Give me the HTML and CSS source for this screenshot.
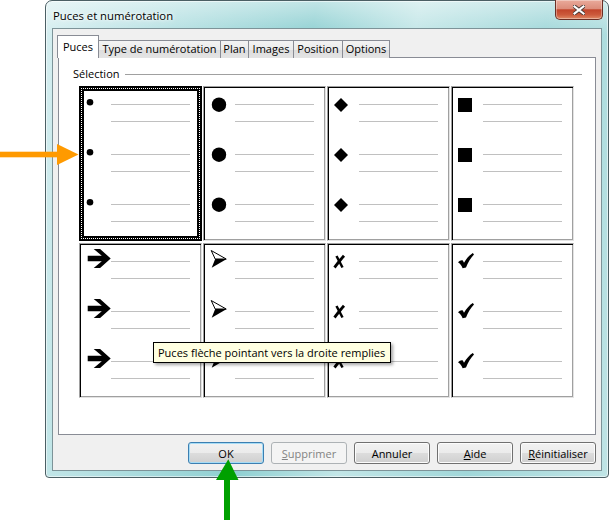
FILE: index.html
```html
<!DOCTYPE html>
<html lang="fr">
<head>
  <meta charset="UTF-8" />
  <title>Puces et numérotation</title>
  <link rel="stylesheet" href="styles.css">
</head>
<body>

  <!-- bullet shapes, reused in every cell -->
  <svg class="defs" width="0" height="0">
    <symbol id="b-dot" viewBox="0 0 31 32"><circle cx="10" cy="14.3" r="3.3"/></symbol>
    <symbol id="b-circle" viewBox="0 0 31 32"><circle cx="15" cy="16.7" r="7.2"/></symbol>
    <symbol id="b-diamond" viewBox="0 0 31 32"><polygon points="13,10 20,17 13,24 6,17"/></symbol>
    <symbol id="b-square" viewBox="0 0 31 32"><rect x="6" y="10" width="14" height="14"/></symbol>
    <symbol id="b-arrow" viewBox="0 0 31 32">
      <path transform="translate(7.7 4)" d="M0 6.8H14.1L6 0H12.4L23 9.5L12.4 19H6L14.1 12.2H0Z"/>
    </symbol>
    <symbol id="b-head" viewBox="0 0 31 32">
      <g transform="translate(6.7 5)">
        <path d="M0.5 0.5L15.5 9H4.5Z" fill="#fff" stroke="#000" stroke-width="1"/>
        <path d="M4.5 9H16L1 17.7Z"/>
      </g>
    </symbol>
    <symbol id="b-cross" viewBox="0 0 31 32">
      <g transform="translate(5 10)" stroke="#000" fill="none">
        <path d="M3.5 1L9.5 12.5" stroke-width="2.5"/>
        <path d="M11 0.8C8 4 5 8 1.5 12.5" stroke-width="2.9"/>
      </g>
    </symbol>
    <symbol id="b-check" viewBox="0 0 31 32">
      <path transform="translate(6 8)" d="M0 9.2C1.6 7.6 3.4 6.8 4.8 7.4L6 9.8C8.4 5.6 11.4 2.2 14.8 0L16 1.4C12.8 4.6 10 9.2 8 14.6L4.6 15.2C3.8 12.8 2.4 10.8 0 9.2Z"/>
    </symbol>
  </svg>

  <div class="stage">

    <div class="window">
      <div class="titlebar">
        <span class="title">Puces et numérotation</span>
        <div class="close">
          <svg width="12" height="10" viewBox="0 0 12 10">
            <path d="M1.5 1.5L10.5 8.5M10.5 1.5L1.5 8.5" stroke="#4a3a36" stroke-width="4" stroke-linecap="square"/>
            <path d="M1.5 1.5L10.5 8.5M10.5 1.5L1.5 8.5" stroke="#fff" stroke-width="2.2" stroke-linecap="square"/>
          </svg>
        </div>
      </div>

      <div class="client">
        <div class="tabs">
          <div class="tab active t-puces">Puces</div>
          <div class="tab t-type">Type de numérotation</div>
          <div class="tab t-plan">Plan</div>
          <div class="tab t-images">Images</div>
          <div class="tab t-position">Position</div>
          <div class="tab t-options">Options</div>
        </div>

        <div class="panel">
          <div class="group-title">
            <span>Sélection</span>
            <i class="rule"></i>
          </div>

          <div class="bullet-grid">
            <div class="cell selected">
              <div class="item"><svg class="mark"><use href="#b-dot"/></svg><div class="lines"><i></i><i></i></div></div>
              <div class="item"><svg class="mark"><use href="#b-dot"/></svg><div class="lines"><i></i><i></i></div></div>
              <div class="item"><svg class="mark"><use href="#b-dot"/></svg><div class="lines"><i></i><i></i></div></div>
            </div>
            <div class="cell">
              <div class="item"><svg class="mark"><use href="#b-circle"/></svg><div class="lines"><i></i><i></i></div></div>
              <div class="item"><svg class="mark"><use href="#b-circle"/></svg><div class="lines"><i></i><i></i></div></div>
              <div class="item"><svg class="mark"><use href="#b-circle"/></svg><div class="lines"><i></i><i></i></div></div>
            </div>
            <div class="cell">
              <div class="item"><svg class="mark"><use href="#b-diamond"/></svg><div class="lines"><i></i><i></i></div></div>
              <div class="item"><svg class="mark"><use href="#b-diamond"/></svg><div class="lines"><i></i><i></i></div></div>
              <div class="item"><svg class="mark"><use href="#b-diamond"/></svg><div class="lines"><i></i><i></i></div></div>
            </div>
            <div class="cell">
              <div class="item"><svg class="mark"><use href="#b-square"/></svg><div class="lines"><i></i><i></i></div></div>
              <div class="item"><svg class="mark"><use href="#b-square"/></svg><div class="lines"><i></i><i></i></div></div>
              <div class="item"><svg class="mark"><use href="#b-square"/></svg><div class="lines"><i></i><i></i></div></div>
            </div>

            <div class="cell">
              <div class="item"><svg class="mark"><use href="#b-arrow"/></svg><div class="lines"><i></i><i></i></div></div>
              <div class="item"><svg class="mark"><use href="#b-arrow"/></svg><div class="lines"><i></i><i></i></div></div>
              <div class="item"><svg class="mark"><use href="#b-arrow"/></svg><div class="lines"><i></i><i></i></div></div>
            </div>
            <div class="cell">
              <div class="item"><svg class="mark"><use href="#b-head"/></svg><div class="lines"><i></i><i></i></div></div>
              <div class="item"><svg class="mark"><use href="#b-head"/></svg><div class="lines"><i></i><i></i></div></div>
              <div class="item"><svg class="mark"><use href="#b-head"/></svg><div class="lines"><i></i><i></i></div></div>
            </div>
            <div class="cell">
              <div class="item"><svg class="mark"><use href="#b-cross"/></svg><div class="lines"><i></i><i></i></div></div>
              <div class="item"><svg class="mark"><use href="#b-cross"/></svg><div class="lines"><i></i><i></i></div></div>
              <div class="item"><svg class="mark"><use href="#b-cross"/></svg><div class="lines"><i></i><i></i></div></div>
            </div>
            <div class="cell">
              <div class="item"><svg class="mark"><use href="#b-check"/></svg><div class="lines"><i></i><i></i></div></div>
              <div class="item"><svg class="mark"><use href="#b-check"/></svg><div class="lines"><i></i><i></i></div></div>
              <div class="item"><svg class="mark"><use href="#b-check"/></svg><div class="lines"><i></i><i></i></div></div>
            </div>
          </div>
        </div>

        <div class="buttons">
          <button class="btn default">OK</button>
          <button class="btn" disabled><u>S</u>upprimer</button>
          <button class="btn">Annuler</button>
          <button class="btn"><u>A</u>ide</button>
          <button class="btn"><u>R</u>éinitialiser</button>
        </div>
      </div>
    </div>

    <!-- Tooltip -->
    <div class="tooltip">Puces flèche pointant vers la droite remplies</div>

    <!-- Callout arrows -->
    <svg class="arrow-orange" width="80" height="23" viewBox="0 0 80 23">
      <rect x="0" y="8.7" width="58" height="5.6"/>
      <polygon points="57,1 78.5,11.5 57,22"/>
    </svg>
    <svg class="arrow-green" width="26" height="62" viewBox="0 0 26 62">
      <polygon points="2,22 14.3,1.3 24.5,22"/>
      <rect x="10" y="21" width="6" height="41"/>
    </svg>
  </div>

</body>
</html>
```

FILE: styles.css
```css
* { margin: 0; padding: 0; box-sizing: border-box; }

body {
  background: #fff;
  font-family: "Open Sans", "Noto Sans", sans-serif;
  font-size: 11px;
  color: #000;
}

.defs {
  position: absolute;
  width: 0;
  height: 0;
}

.stage {
  position: relative;
  width: 610px;
  height: 520px;
  overflow: hidden;
  background: #fff;
}

/* --- WINDOW FRAME --- */
.window {
  margin-left: 45px;
  width: 564px;
  height: 478px;
  border: 1px solid #4b5f64;
  border-radius: 7px 7px 4px 4px;
  padding: 0 6px 6px;
  background:
    linear-gradient(to bottom, rgba(255,255,255,0.45), rgba(255,255,255,0) 34px),
    linear-gradient(100deg, #d6eef0 0%, #b2dfe1 22%, #8fd0d2 42%, #c2e6e7 58%, #a0d7d9 78%, #bfe4e5 100%);
  box-shadow: inset 0 0 0 1px rgba(255,255,255,0.55);
}

.titlebar {
  height: 27px;
  display: flex;
  align-items: flex-start;
}

.title {
  padding: 7px 0 0 1px;
  font-size: 11.3px;
  line-height: 16px;
  text-shadow: 0 0 6px #fff, 0 0 3px #fff;
}

.close {
  margin: -1px -1px 0 auto;
  width: 48px;
  height: 20px;
  border: 1px solid #6b2f25;
  border-top: none;
  border-radius: 0 0 5px 5px;
  background: linear-gradient(#e9aa9b 0%, #dc8d7b 45%, #c2452b 52%, #cc5a3c 78%, #e08a66 100%);
  box-shadow: inset 0 0 0 1px rgba(255,255,255,0.35);
  display: flex;
  align-items: center;
  justify-content: center;
}

.client {
  height: 443px;
  border: 1px solid #7d9398;
  background: #f0f0f0;
  padding: 6px 5px 0;
}

/* --- TABS --- */
.tabs {
  display: flex;
  align-items: flex-end;
  height: 23px;
  margin-bottom: -1px;
  position: relative;
  z-index: 1;
}

.tab {
  height: 18px;
  margin-left: -1px;
  border: 1px solid #898c95;
  border-bottom: none;
  background: linear-gradient(#f3f3f3 0%, #ebebeb 50%, #dddddd 51%, #e4e4e4 100%);
  font-size: 11px;
  line-height: 16px;
  text-align: center;
  white-space: nowrap;
}

.tab.active {
  height: 23px;
  background: #fff;
  line-height: 21px;
  position: relative;
  z-index: 1;
}

.t-puces { width: 42px; }
.t-type { width: 123px; }
.t-plan { width: 29px; }
.t-images { width: 46px; }
.t-position { width: 50px; }
.t-options { width: 48px; }

/* --- PANEL --- */
.panel {
  height: 378px;
  border: 1px solid #898c95;
  background: #fff;
}

.group-title {
  display: flex;
  align-items: center;
  gap: 5px;
  height: 16px;
  margin: 7px 13px 0 14px;
  font-size: 11px;
}

.group-title .rule {
  flex: 1;
  height: 1px;
  background: #a0a0a0;
  margin-top: 2px;
}

.bullet-grid {
  display: grid;
  grid-template-columns: repeat(4, 123px);
  grid-auto-rows: 155px;
  column-gap: 1px;
  row-gap: 2px;
  margin: 5px 0 0 20px;
}

.cell {
  border: 1px solid;
  border-color: #a0a0a0 #e3e3e3 #e3e3e3 #a0a0a0;
  box-shadow: inset 1px 1px 0 #000, inset -1px -1px 0 #a0a0a0;
  padding-top: 1px;
  background: #fff;
}

.cell.selected {
  border-color: #000;
  box-shadow: inset 0 0 0 4px #000;
  outline: 1px dotted #fff;
  outline-offset: -3px;
}

.item {
  display: flex;
  height: 50px;
}

.mark {
  flex: none;
  width: 31px;
  height: 32px;
  fill: #000;
}

.lines {
  width: 79px;
}

.lines i {
  display: block;
  height: 1px;
  margin-top: 16px;
  background: #c0c0c0;
}

/* --- BUTTONS --- */
.buttons {
  display: flex;
  justify-content: flex-end;
  gap: 7px;
  margin-top: 7px;
}

.btn {
  width: 76px;
  height: 22px;
  border: 1px solid #707070;
  border-radius: 3px;
  background: linear-gradient(#f2f2f2 0%, #ebebeb 50%, #dddddd 50%, #cfcfcf 100%);
  box-shadow: inset 0 0 0 1px #fcfcfc;
  font-family: "Open Sans", "Noto Sans", sans-serif;
  font-size: 11px;
  color: #000;
}

.btn.default {
  border-color: #3c7fb1;
  box-shadow: inset 0 0 0 1px #a6dcf6;
}

.btn:disabled {
  border-color: #adb2b5;
  background: #f4f4f4;
  box-shadow: none;
  color: #838383;
}

/* --- OVERLAYS --- */
.tooltip {
  position: absolute;
  left: 153px;
  top: 342px;
  width: 238px;
  height: 21px;
  padding: 0 4px;
  border: 1px solid #000;
  background: #ffffe1;
  box-shadow: 2px 2px 3px rgba(0,0,0,0.35);
  font-size: 11px;
  line-height: 19px;
  white-space: nowrap;
}

.arrow-orange {
  position: absolute;
  left: 0;
  top: 143px;
  fill: #ff9a00;
}

.arrow-green {
  position: absolute;
  left: 214px;
  top: 458px;
  fill: #00a000;
}
```
